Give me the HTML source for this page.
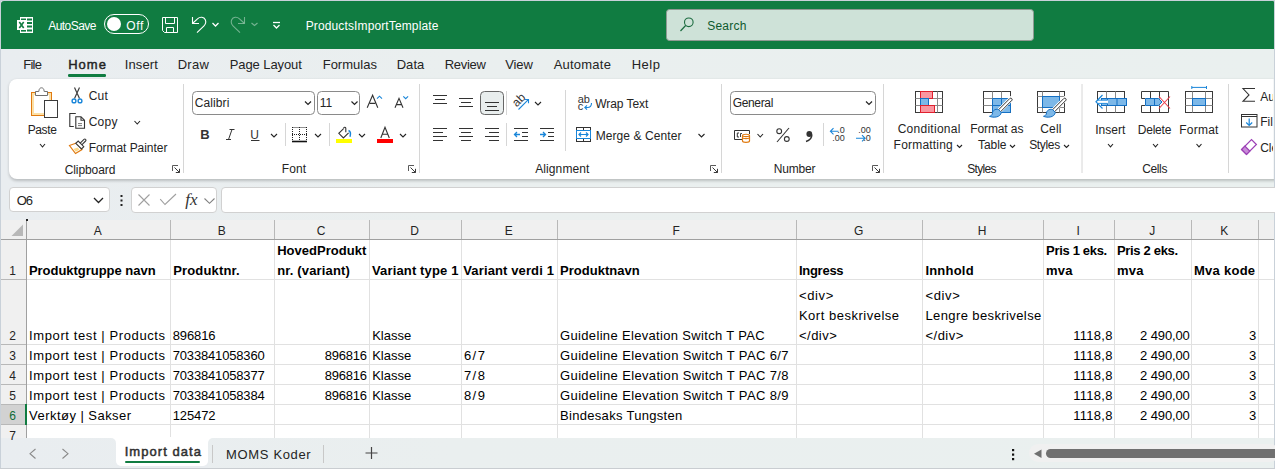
<!DOCTYPE html>
<html><head><meta charset="utf-8"><style>
html,body{margin:0;padding:0;width:1275px;height:469px;overflow:hidden;position:relative;background:#fff}
.t{position:absolute;white-space:pre;line-height:1;font-family:"Liberation Sans",sans-serif}
svg{overflow:visible}
</style></head><body>
<div style="position:absolute;left:0px;top:0px;width:1275px;height:469px;background:#C9D1D9"></div>
<div style="position:absolute;left:1px;top:1px;width:1273px;height:467px;background:linear-gradient(90deg,#E9EDF0 0px,#EAEFEF 450px,#EAF0EF 1273px)"></div>
<div style="position:absolute;left:1px;top:1px;width:1273px;height:48px;background:#107C41;border-top-left-radius:3px;border-top-right-radius:1px"></div>
<div style="position:absolute;left:9px;top:79px;width:1280px;height:100px;background:#fff;border-radius:8px;box-shadow:0 1.5px 3px rgba(0,0,0,0.2)"></div>
<div style="position:absolute;left:1274px;top:49px;width:1px;height:420px;background:#C9D1D9"></div>
<div style="position:absolute;left:9px;top:187px;width:101px;height:25px;background:#fff;border:1px solid #D1D1D1;box-sizing:border-box;border-radius:4px"></div>
<div style="position:absolute;left:131px;top:187px;width:86px;height:26px;background:#fff;border:1px solid #D1D1D1;box-sizing:border-box;border-radius:4px"></div>
<div style="position:absolute;left:221px;top:187px;width:1060px;height:26px;background:#fff;border:1px solid #D1D1D1;box-sizing:border-box;border-radius:4px"></div>
<div style="position:absolute;left:1px;top:220px;width:1273px;height:218px;background:#fff"></div>
<div style="position:absolute;left:1px;top:220px;width:1273px;height:19px;background:#F0F0F0"></div>
<div style="position:absolute;left:1px;top:240px;width:25px;height:198px;background:#F0F0F0"></div>
<div style="position:absolute;left:1px;top:405px;width:25px;height:19px;background:#D2D2D2"></div>
<div style="position:absolute;left:27px;top:279px;width:1247px;height:1px;background:#E1E1E1"></div>
<div style="position:absolute;left:27px;top:344px;width:1247px;height:1px;background:#E1E1E1"></div>
<div style="position:absolute;left:27px;top:364px;width:1247px;height:1px;background:#E1E1E1"></div>
<div style="position:absolute;left:27px;top:384px;width:1247px;height:1px;background:#E1E1E1"></div>
<div style="position:absolute;left:27px;top:404px;width:1247px;height:1px;background:#E1E1E1"></div>
<div style="position:absolute;left:27px;top:424px;width:1247px;height:1px;background:#E1E1E1"></div>
<div style="position:absolute;left:170px;top:240px;width:1px;height:198px;background:#E1E1E1"></div>
<div style="position:absolute;left:274px;top:240px;width:1px;height:198px;background:#E1E1E1"></div>
<div style="position:absolute;left:369px;top:240px;width:1px;height:198px;background:#E1E1E1"></div>
<div style="position:absolute;left:461px;top:240px;width:1px;height:198px;background:#E1E1E1"></div>
<div style="position:absolute;left:557px;top:240px;width:1px;height:198px;background:#E1E1E1"></div>
<div style="position:absolute;left:796px;top:240px;width:1px;height:198px;background:#E1E1E1"></div>
<div style="position:absolute;left:922px;top:240px;width:1px;height:198px;background:#E1E1E1"></div>
<div style="position:absolute;left:1043px;top:240px;width:1px;height:198px;background:#E1E1E1"></div>
<div style="position:absolute;left:1114px;top:240px;width:1px;height:198px;background:#E1E1E1"></div>
<div style="position:absolute;left:1191px;top:240px;width:1px;height:198px;background:#E1E1E1"></div>
<div style="position:absolute;left:1258px;top:240px;width:1px;height:198px;background:#E1E1E1"></div>
<div style="position:absolute;left:170px;top:220px;width:1px;height:19px;background:#B8B8B8"></div>
<div style="position:absolute;left:274px;top:220px;width:1px;height:19px;background:#B8B8B8"></div>
<div style="position:absolute;left:369px;top:220px;width:1px;height:19px;background:#B8B8B8"></div>
<div style="position:absolute;left:461px;top:220px;width:1px;height:19px;background:#B8B8B8"></div>
<div style="position:absolute;left:557px;top:220px;width:1px;height:19px;background:#B8B8B8"></div>
<div style="position:absolute;left:796px;top:220px;width:1px;height:19px;background:#B8B8B8"></div>
<div style="position:absolute;left:922px;top:220px;width:1px;height:19px;background:#B8B8B8"></div>
<div style="position:absolute;left:1043px;top:220px;width:1px;height:19px;background:#B8B8B8"></div>
<div style="position:absolute;left:1114px;top:220px;width:1px;height:19px;background:#B8B8B8"></div>
<div style="position:absolute;left:1191px;top:220px;width:1px;height:19px;background:#B8B8B8"></div>
<div style="position:absolute;left:1258px;top:220px;width:1px;height:19px;background:#B8B8B8"></div>
<div style="position:absolute;left:1px;top:279px;width:25px;height:1px;background:#B8B8B8"></div>
<div style="position:absolute;left:1px;top:344px;width:25px;height:1px;background:#B8B8B8"></div>
<div style="position:absolute;left:1px;top:364px;width:25px;height:1px;background:#B8B8B8"></div>
<div style="position:absolute;left:1px;top:384px;width:25px;height:1px;background:#B8B8B8"></div>
<div style="position:absolute;left:1px;top:404px;width:25px;height:1px;background:#B8B8B8"></div>
<div style="position:absolute;left:1px;top:424px;width:25px;height:1px;background:#B8B8B8"></div>
<div style="position:absolute;left:1px;top:239px;width:1273px;height:1px;background:#A0A0A0"></div>
<div style="position:absolute;left:26px;top:220px;width:1px;height:218px;background:#A0A0A0"></div>
<div style="position:absolute;left:25px;top:404px;width:2px;height:21px;background:#107C41"></div>
<div style="position:absolute;left:26px;top:219px;width:2px;height:2px;background:#222"></div>
<div style="position:absolute;left:100px;top:438px;width:130px;height:10px;background:#fff"></div>
<div style="position:absolute;left:100px;top:458px;width:130px;height:10px;background:#E9EDF0"></div>
<div style="position:absolute;left:116px;top:437px;width:92px;height:29px;background:#fff;border-radius:0 0 5px 5px"></div>
<div style="position:absolute;left:1px;top:438px;width:115px;height:30px;background:linear-gradient(90deg,#E9EDF0 0px,#EAEFEF 450px,#EAF0EF 1273px);background-size:1273px 30px;border-top-right-radius:5px"></div>
<div style="position:absolute;left:208px;top:438px;width:1066px;height:30px;background:linear-gradient(90deg,#E9EDF0 0px,#EAEFEF 450px,#EAF0EF 1273px);background-size:1273px 30px;background-position:-207px 0;border-top-left-radius:5px"></div>
<div style="position:absolute;left:125px;top:461px;width:75px;height:2px;background:#107C41;border-radius:1px"></div>
<div style="position:absolute;left:212px;top:445px;width:1px;height:18px;background:#C8C8C8"></div>
<div style="position:absolute;left:323px;top:445px;width:1px;height:18px;background:#C8C8C8"></div>
<div style="position:absolute;left:1029px;top:444px;width:250px;height:18px;background:#F0F0F0;border-radius:9px"></div>
<div style="position:absolute;left:1046px;top:449px;width:240px;height:9px;background:#707070;border-radius:4.5px"></div>
<div style="position:absolute;left:0px;top:468px;width:1275px;height:1px;background:#C9CDD1"></div>
<div style="position:absolute;left:68px;top:74px;width:38px;height:2.5px;background:#107C41;border-radius:1.25px"></div>
<svg style="position:absolute;left:0;top:0" width="1275" height="469" viewBox="0 0 1275 469"><rect x="20" y="17" width="13" height="16" fill="#fff"/><rect x="21" y="18.5" width="5" height="1.6" fill="#107C41"/><rect x="27" y="18.5" width="5" height="2" fill="#107C41"/><rect x="27" y="22" width="5" height="2" fill="#107C41"/><rect x="27" y="25.5" width="5" height="2" fill="#107C41"/><rect x="27" y="29.5" width="5" height="2" fill="#107C41"/><rect x="21" y="30" width="5" height="1.6" fill="#107C41"/><rect x="17" y="20" width="9" height="10" fill="#fff"/><path d="M19.3,22 L23.7,28 M23.7,22 L19.3,28" stroke="#107C41" stroke-width="1.6"/><rect x="104.5" y="14.5" width="44" height="19" rx="9.5" stroke="#fff" stroke-width="1" fill="none"/><circle cx="114" cy="24" r="7" fill="#fff"/><path d="M162.5,17.5 H177.5 V32.5 H164.5 L162.5,30.5 Z M165.5,17.5 V23.5 H174.5 V17.5 M166.5,32.5 V27.5 H173.5 V32.5" stroke="#fff" stroke-width="1" fill="none"/><path d="M192.5,17 V23.5 H199" stroke="#fff" stroke-width="1.1" fill="none"/><path d="M193,23 L197.5,18.8 C200,16.5 204,16.8 205.3,19.8 C206.3,22.2 205.5,24.3 204,25.8 L197,32.7" stroke="#fff" stroke-width="1.1" fill="none"/><path d="M212.5,23 L215.5,26 L218.5,23" stroke="#fff" stroke-width="1.3" fill="none"/><path d="M244.5,17 V23.5 H238" stroke="rgba(255,255,255,0.42)" stroke-width="1.1" fill="none"/><path d="M244,23 L239.5,18.8 C237,16.5 233,16.8 231.7,19.8 C230.7,22.2 231.5,24.3 233,25.8 L240,32.7" stroke="rgba(255,255,255,0.42)" stroke-width="1.1" fill="none"/><path d="M251.5,23 L254.5,25.5 L257.5,23" stroke="rgba(255,255,255,0.42)" stroke-width="1.2" fill="none"/><path d="M273,22.5 H280" stroke="#fff" stroke-width="1.3"/><path d="M273.5,25 L276.5,28 L279.5,25" stroke="#fff" stroke-width="1.3" fill="none"/><rect x="666.5" y="9.5" width="367" height="31" rx="3" fill="#CEE2D8" stroke="#8F9A93" stroke-width="1"/><circle cx="688.8" cy="22.3" r="4.3" stroke="#1B6B3F" stroke-width="1.1" fill="none"/><path d="M685.6,25.5 L680.5,31" stroke="#1B6B3F" stroke-width="1.2"/><rect x="31.5" y="92.5" width="20" height="23" fill="#fff" stroke="#E07A10" stroke-width="1"/><rect x="33" y="94" width="17" height="20" fill="none" stroke="#FCE0A6" stroke-width="2"/><path d="M35.5,95.5 V91.5 H38.8 C39,88.6 40.2,87.8 41.5,87.8 C42.8,87.8 44,88.6 44.2,91.5 H47.5 V95.5 Z" fill="#fff" stroke="#707070" stroke-width="1"/><rect x="44.5" y="100.5" width="13" height="17" fill="#fff" stroke="#3B3B3B" stroke-width="1"/><path d="M40,144 L42.5,147 L45,144" stroke="#242424" stroke-width="1.1" fill="none"/><path d="M74.5,87.5 L79.5,98.5 M79.5,87.5 L74.5,98.5" stroke="#404040" stroke-width="1.2"/><circle cx="74" cy="100.9" r="1.9" stroke="#1A86D9" stroke-width="1.4" fill="none"/><circle cx="80" cy="100.9" r="1.9" stroke="#1A86D9" stroke-width="1.4" fill="none"/><path d="M75.8,113.5 H69.8 V126.5 H73.8" stroke="#333" stroke-width="1.1" fill="none"/><path d="M75.8,116.7 H81 L84.5,120.2 V128.3 H75.8 Z M81,116.7 V120.2 H84.5" stroke="#333" stroke-width="1.1" fill="none"/><path d="M78,123.6 H82 M78,125.6 H82" stroke="#555" stroke-width="0.8"/><path d="M134.5,121 L137.25,124 L140.0,121" stroke="#242424" stroke-width="1.1" fill="none"/><path d="M76.5,143 L69.5,145.5 L75.5,153.5 L82,149.5 Z" fill="#fff" stroke="#E07A10" stroke-width="1.2"/><path d="M73.5,149 L75.8,151.8 L79.5,149.6 L77.5,147.5 Z" fill="#FCD98A"/><path d="M81,144 L84.8,140.2" stroke="#3a3a3a" stroke-width="3.4" stroke-linecap="round"/><path d="M81,144 L84.8,140.2" stroke="#fff" stroke-width="1.2" stroke-linecap="round"/><path d="M75.8,143.3 L81.5,149 L83.8,146.7 L78.2,141 Z" fill="#fff" stroke="#3a3a3a" stroke-width="1.1"/><path d="M172.5,171 V165.5 H178" stroke="#5a5a5a" stroke-width="1" fill="none"/><path d="M174.5,167.5 L179.5,172.5 M179.5,168.8 V172.5 H175.8" stroke="#3a3a3a" stroke-width="1" fill="none"/><path d="M183.5,84 V173" stroke="#D6D6D6" stroke-width="1"/><path d="M419.5,84 V173" stroke="#D6D6D6" stroke-width="1"/><path d="M721.5,84 V173" stroke="#D6D6D6" stroke-width="1"/><path d="M883.5,84 V173" stroke="#D6D6D6" stroke-width="1"/><path d="M1082,84 V173" stroke="#D6D6D6" stroke-width="1"/><path d="M1228.5,84 V173" stroke="#D6D6D6" stroke-width="1"/><rect x="192.5" y="91.5" width="122" height="23" rx="4" fill="#fff" stroke="#8A8A8A" stroke-width="1"/><path d="M305,101.5 L308.0,104.5 L311,101.5" stroke="#242424" stroke-width="1.2" fill="none"/><rect x="317.5" y="91.5" width="42" height="23" rx="4" fill="#fff" stroke="#8A8A8A" stroke-width="1"/><path d="M351.5,101.5 L354.5,104.5 L357.5,101.5" stroke="#242424" stroke-width="1.2" fill="none"/><path d="M367.2,107.7 L372.6,95.2 L377.8,107.7 M369.8,103.4 H375.2" stroke="#333" stroke-width="1.1" fill="none"/><path d="M377,98.7 L379.5,96.2 L382,98.7" stroke="#1A86D9" stroke-width="1.1" fill="none"/><path d="M395,107.7 L399,98.3 L403,107.7 M396.7,104.6 H401.3" stroke="#333" stroke-width="1.1" fill="none"/><path d="M403.3,96.3 L405.7,98.7 L408.1,96.3" stroke="#1A86D9" stroke-width="1.1" fill="none"/><path d="M271,134 L274.0,137 L277,134" stroke="#242424" stroke-width="1.1" fill="none"/><path d="M229.5,129.5 H234.5 M226,139.5 H231 M232,129.5 L228.5,139.5" stroke="#333" stroke-width="1"/><path d="M251,140.5 H259.5" stroke="#333" stroke-width="1"/><path d="M285.5,123 V146 M329.5,123 V146" stroke="#D6D6D6" stroke-width="1"/><path d="M292.5,127.5 H307 M292.5,127 V140 M306.5,127 V140 M299.5,127 V140 M292,134.5 H307" stroke="#222" stroke-width="1" stroke-dasharray="1 1" fill="none"/><path d="M292,141.5 H307" stroke="#111" stroke-width="1.6"/><path d="M315,134 L318.0,137 L321,134" stroke="#242424" stroke-width="1.1" fill="none"/><path d="M343.6,128.6 L338.8,133.3 L343.4,138 L348.6,132.8" fill="#fff" stroke="#333" stroke-width="1.1"/><path d="M343.6,128.6 C343.6,126.9 345.6,126.6 345.8,128.4 V132.2" stroke="#333" stroke-width="1.1" fill="none"/><path d="M348.5,130.5 C350.3,131.2 350.8,134 350,136.8" stroke="#1A86D9" stroke-width="1.5" fill="none"/><rect x="336" y="139" width="16" height="4" fill="#FFFF00"/><path d="M359,134 L362.0,137 L365,134" stroke="#242424" stroke-width="1.1" fill="none"/><path d="M380.8,138 L385,127.3 L389.3,138 M382.3,134.3 H387.8" stroke="#333" stroke-width="1.1" fill="none"/><rect x="377" y="139" width="16" height="4" fill="#FF0000"/><path d="M400,134 L403.0,137 L406,134" stroke="#242424" stroke-width="1.1" fill="none"/><path d="M408.5,171 V165.5 H414" stroke="#5a5a5a" stroke-width="1" fill="none"/><path d="M410.5,167.5 L415.5,172.5 M415.5,168.8 V172.5 H411.8" stroke="#3a3a3a" stroke-width="1" fill="none"/><path d="M433,95.5 H447 M435,99.5 H445 M433,103.5 H447" stroke="#333" stroke-width="1"/><path d="M459,98.5 H473 M461,102.5 H471 M459,106.5 H473" stroke="#333" stroke-width="1"/><rect x="480.5" y="91.5" width="23" height="23" rx="4" fill="#E9EEEE" stroke="#666" stroke-width="1"/><path d="M485,102.5 H499 M487,106.5 H497 M485,110.5 H499" stroke="#333" stroke-width="1"/><path d="M506.5,91 V115 M506.5,123 V146 M823.5,123 V146" stroke="#D6D6D6" stroke-width="1"/><path d="M518.5,109.5 L528.3,99.7 M524.8,99.5 H528.5 V103.2" stroke="#1A86D9" stroke-width="1.1" fill="none"/><path d="M535,102 L538.0,105 L541,102" stroke="#242424" stroke-width="1.1" fill="none"/><path d="M433,128.5 H447 M433,132.5 H443 M433,136.5 H447 M433,140.5 H443" stroke="#333" stroke-width="1"/><path d="M459,128.5 H473 M461,132.5 H471 M459,136.5 H473 M461,140.5 H471" stroke="#333" stroke-width="1"/><path d="M485,128.5 H499 M489,132.5 H499 M485,136.5 H499 M489,140.5 H499" stroke="#333" stroke-width="1"/><path d="M514,128.5 H528 M522,132.5 H528 M522,136.5 H528 M514,140.5 H528" stroke="#333" stroke-width="1"/><path d="M520,134.5 H514.8 M517,132 L514.5,134.5 L517,137" stroke="#1A86D9" stroke-width="1.3" fill="none"/><path d="M540,128.5 H554 M548,132.5 H554 M548,136.5 H554 M540,140.5 H554" stroke="#333" stroke-width="1"/><path d="M540,134.5 H545.2 M543,132 L545.5,134.5 L543,137" stroke="#1A86D9" stroke-width="1.3" fill="none"/><path d="M565.5,90 V151" stroke="#D6D6D6" stroke-width="1"/><path d="M591.5,103 C591.5,106 590,107.5 587.5,107.5 H585 M587,105.3 L584.8,107.5 L587,109.7" stroke="#1A86D9" stroke-width="1.1" fill="none"/><rect x="576.5" y="127.5" width="14" height="14" fill="none" stroke="#333" stroke-width="1"/><path d="M583.5,127.5 V130.5 M583.5,138.5 V141.5" stroke="#333" stroke-width="1"/><rect x="576.5" y="130.5" width="14" height="8" fill="#fff" stroke="#1A86D9" stroke-width="1"/><path d="M579,134.5 H588 M581,132.5 L579,134.5 L581,136.5 M586,132.5 L588,134.5 L586,136.5" stroke="#1A86D9" stroke-width="1.2" fill="none"/><path d="M698.5,134 L701.5,137 L704.5,134" stroke="#242424" stroke-width="1.1" fill="none"/><path d="M710.5,171 V165.5 H716" stroke="#5a5a5a" stroke-width="1" fill="none"/><path d="M712.5,167.5 L717.5,172.5 M717.5,168.8 V172.5 H713.8" stroke="#3a3a3a" stroke-width="1" fill="none"/><rect x="730.5" y="91.5" width="145" height="23" rx="4" fill="#fff" stroke="#8A8A8A" stroke-width="1"/><path d="M866,101.5 L869.0,104.5 L872,101.5" stroke="#242424" stroke-width="1.2" fill="none"/><path d="M744,139.5 H734.5 V130.5 H749.5 V134" stroke="#333" stroke-width="1" fill="none"/><path d="M739,133 H737.3 V137 H739" stroke="#333" stroke-width="1" fill="none"/><path d="M740.5,137 V133.5 H742" stroke="#333" stroke-width="0.9" fill="none"/><path d="M742.5,135.5 C742.5,133.8 749.5,133.8 749.5,135.5 V141 C749.5,142.8 742.5,142.8 742.5,141 Z" fill="#fff" stroke="#E07A10" stroke-width="1.2"/><path d="M742.5,137.5 C742.5,139 749.5,139 749.5,137.5 M742.5,135.5 C742.5,137 749.5,137 749.5,135.5" stroke="#E07A10" stroke-width="1.1" fill="none"/><path d="M757.5,134 L760.25,137 L763.0,134" stroke="#242424" stroke-width="1.1" fill="none"/><circle cx="779.2" cy="131.2" r="2.4" stroke="#333" stroke-width="1.1" fill="none"/><circle cx="786.8" cy="139" r="2.4" stroke="#333" stroke-width="1.1" fill="none"/><path d="M789,128 L777,142" stroke="#333" stroke-width="1.1"/><circle cx="809.3" cy="134" r="2.9" fill="#333"/><path d="M811.8,134.5 C811.8,138 809.5,140.5 806,141.5" stroke="#333" stroke-width="1.6" fill="none"/><path d="M838.5,131.3 H830.5 M833.5,128.2 L830.4,131.3 L833.5,134.4" stroke="#1A86D9" stroke-width="1.1" fill="none"/><path d="M856,138.3 H865 M862,135.2 L865.1,138.3 L862,141.4" stroke="#1A86D9" stroke-width="1.1" fill="none"/><path d="M872.5,171 V165.5 H878" stroke="#5a5a5a" stroke-width="1" fill="none"/><path d="M874.5,167.5 L879.5,172.5 M879.5,168.8 V172.5 H875.8" stroke="#3a3a3a" stroke-width="1" fill="none"/><rect x="915.5" y="91.5" width="27" height="21" fill="#fff" stroke="#3a3a3a" stroke-width="1"/><path d="M915.5,98.5 H942.5 M915.5,105.5 H942.5 M920.5,91.5 V112.5 M937.5,91.5 V112.5" stroke="#8a8a8a" stroke-width="1"/><rect x="920.5" y="91.5" width="12" height="7" fill="#FA96A0" stroke="#E0202E" stroke-width="1"/><rect x="920.5" y="98.5" width="8" height="7" fill="#7DB8E8" stroke="#1470C4" stroke-width="1"/><path d="M928.5,98.5 H942.5 M928.5,105.5 H942.5" stroke="#fff" stroke-width="0"/><rect x="920.5" y="105.5" width="14" height="7" fill="#FA96A0" stroke="#E0202E" stroke-width="1"/><rect x="983.5" y="91.5" width="27" height="21" fill="#fff" stroke="#3a3a3a" stroke-width="1"/><path d="M983.5,98.5 H1010.5 M983.5,105.5 H1010.5 M992.5,91.5 V112.5 M1001.5,91.5 V112.5" stroke="#8a8a8a" stroke-width="1"/><path d="M992.5,112.5 V98.5 H1010.5 V112.5 Z" fill="#7DB8E8" stroke="#1470C4" stroke-width="1"/><path d="M992.5,105.5 H1010.5 M1001.5,98.5 V112.5" stroke="#1470C4" stroke-width="1"/><path d="M999.0,111.0 L1011.5,98.5" stroke="#fff" stroke-width="5" stroke-linecap="round"/><path d="M998.3,110.0 L1009.8,98.5 C1010.8,97.5 1012.8,98.8 1012.0,100.2 L1000.3,112.0 Z" fill="#fff" stroke="#333" stroke-width="1"/><path d="M998.5,109.5 C995.0,108.5 992.5,111.0 992.5,113.0 C992.5,115.0 991.0,115.8 989.5,116.3 C993.5,118.0 1000.5,117.5 1001.3,112.5 Z" fill="#7DB8E8" stroke="#1470C4" stroke-width="1"/><rect x="1037.5" y="91.5" width="27" height="21" fill="#fff" stroke="#3a3a3a" stroke-width="1"/><path d="M1037.5,96.5 H1064.5 M1037.5,107.5 H1064.5 M1042.5,91.5 V112.5 M1059.5,91.5 V112.5" stroke="#8a8a8a" stroke-width="1"/><rect x="1042.5" y="96.5" width="17" height="11" fill="#7DB8E8" stroke="#1470C4" stroke-width="1"/><path d="M1053.0,111.0 L1065.5,98.5" stroke="#fff" stroke-width="5" stroke-linecap="round"/><path d="M1052.3,110.0 L1063.8,98.5 C1064.8,97.5 1066.8,98.8 1066.0,100.2 L1054.3,112.0 Z" fill="#fff" stroke="#333" stroke-width="1"/><path d="M1052.5,109.5 C1049.0,108.5 1046.5,111.0 1046.5,113.0 C1046.5,115.0 1045.0,115.8 1043.5,116.3 C1047.5,118.0 1054.5,117.5 1055.3,112.5 Z" fill="#7DB8E8" stroke="#1470C4" stroke-width="1"/><path d="M957,145 L959.5,147.5 L962,145" stroke="#242424" stroke-width="1.1" fill="none"/><path d="M1010,145 L1012.5,147.5 L1015,145" stroke="#242424" stroke-width="1.1" fill="none"/><path d="M1064,145 L1066.5,147.5 L1069,145" stroke="#242424" stroke-width="1.1" fill="none"/><rect x="1097.5" y="91.5" width="27" height="21" fill="#fff" stroke="#3a3a3a" stroke-width="1"/><path d="M1106.5,91.5 V112.5 M1115.5,91.5 V112.5" stroke="#8a8a8a" stroke-width="1"/><rect x="1101.5" y="98.5" width="25" height="7" fill="#7DB8E8" stroke="#1470C4" stroke-width="1"/><path d="M1107.5,98.5 V105.5 M1117,98.5 V105.5" stroke="#1470C4" stroke-width="1"/><rect x="1097" y="100.2" width="11" height="3.2" fill="#fff"/><path d="M1097,100.2 H1107.5 M1097,103.4 H1107.5" stroke="#1A86D9" stroke-width="0.9"/><path d="M1102.5,95 L1096,101.8 L1102.5,108.5" stroke="#1A86D9" stroke-width="1.2" fill="none"/><path d="M1141.5,98.5 V91.5 H1168.5 V112.5 H1141.5 V105.5 M1150.5,91.5 V98.5 M1159.5,91.5 V98.5 M1150.5,105.5 V112.5 M1159.5,105.5 V112.5 M1141.5,98.5 H1145 M1141.5,105.5 H1145" stroke="#3a3a3a" stroke-width="1" fill="none"/><path d="M1145.5,98.5 H1158.5 L1162,102 L1158.5,105.5 H1145.5 Z" fill="#7DB8E8" stroke="#1470C4" stroke-width="1"/><path d="M1154.5,98.5 V105.5" stroke="#1470C4" stroke-width="1"/><path d="M1159,96.5 L1170,108.5 M1170,96.5 L1159,108.5" stroke="#EE3F4B" stroke-width="1.1"/><path d="M1191.8,87.4 H1206.5 M1191.8,86 V89 M1206.5,86 V89" stroke="#1A86D9" stroke-width="1"/><rect x="1185.5" y="91.5" width="27" height="21" fill="#fff" stroke="#3a3a3a" stroke-width="1"/><path d="M1185.5,98.5 H1212.5 M1185.5,105.5 H1212.5 M1192.5,91.5 V112.5 M1205.5,91.5 V112.5" stroke="#8a8a8a" stroke-width="1"/><rect x="1192.5" y="98.5" width="13" height="7" fill="#7DB8E8" stroke="#1470C4" stroke-width="1"/><path d="M1108,144 L1110.5,146.8 L1113,144" stroke="#242424" stroke-width="1.1" fill="none"/><path d="M1153,144 L1155.5,146.8 L1158,144" stroke="#242424" stroke-width="1.1" fill="none"/><path d="M1196.5,144 L1199.0,146.8 L1201.5,144" stroke="#242424" stroke-width="1.1" fill="none"/><path d="M1255,88.5 H1243 L1249,95 L1243,101.3 H1255" stroke="#333" stroke-width="1.1" fill="none"/><rect x="1241.5" y="114.5" width="15.5" height="12.5" fill="#fff" stroke="#333" stroke-width="1"/><path d="M1241.5,116.5 H1257" stroke="#333" stroke-width="1"/><path d="M1249.2,118.5 V125.5 M1246.2,122.5 L1249.2,125.5 L1252.2,122.5" stroke="#1A86D9" stroke-width="1.2" fill="none"/><path d="M1256.4,144.5 L1251.5,139.6 L1241.6,149.5 L1246.5,154.4 Z" fill="#fff" stroke="#9B3FB5" stroke-width="1.2"/><path d="M1241.6,149.5 L1246.5,154.4 L1249.8,151.1 L1244.9,146.2 Z" fill="#C88BD8" stroke="#9B3FB5" stroke-width="1.2"/><path d="M94,198 L98.5,202.5 L103,198" stroke="#242424" stroke-width="1.3" fill="none"/><rect x="120.5" y="195" width="2" height="2" fill="#222"/><rect x="120.5" y="199.5" width="2" height="2" fill="#222"/><rect x="120.5" y="204" width="2" height="2" fill="#222"/><path d="M138.5,194.5 L149.5,205.5 M149.5,194.5 L138.5,205.5" stroke="#A0A0A0" stroke-width="1.1"/><path d="M160.2,199.2 L165,204.5 L176,194" stroke="#A0A0A0" stroke-width="1.1" fill="none"/><path d="M204.5,198.5 L209.5,203.3 L214.5,198.5" stroke="#808080" stroke-width="1.1" fill="none"/><path d="M23,224.5 V236 H11.5 Z" fill="#B8B8B8"/><path d="M35.5,449 L30,453.7 L35.5,458.5 M62.5,449 L68,453.7 L62.5,458.5" stroke="#8a8a8a" stroke-width="1.1" fill="none"/><path d="M371.5,447 V459 M365.5,453 H377.5" stroke="#444" stroke-width="1.2"/><rect x="1012" y="449" width="2.2" height="2.2" fill="#111"/><rect x="1012" y="453.5" width="2.2" height="2.2" fill="#111"/><rect x="1012" y="458" width="2.2" height="2.2" fill="#111"/><path d="M1041.5,449.5 V458 L1034,453.7 Z" fill="#707070"/></svg>
<div class="t" style="left:48.2px;top:19.5px;font-size:12px;font-weight:400;color:#FFFFFF;letter-spacing:-0.550px;">AutoSave</div>
<div class="t" style="left:126.2px;top:19.5px;font-size:12px;font-weight:400;color:#FFFFFF;letter-spacing:0.702px;">Off</div>
<div class="t" style="left:305.7px;top:19.5px;font-size:12px;font-weight:400;color:#FFFFFF;letter-spacing:0.126px;">ProductsImportTemplate</div>
<div class="t" style="left:707.2px;top:20px;font-size:12px;font-weight:400;color:#0F5A2E;letter-spacing:0.234px;">Search</div>
<div class="t" style="left:23.2px;top:58px;font-size:13px;font-weight:400;color:#242424;letter-spacing:-0.751px;">File</div>
<div class="t" style="left:124.7px;top:58px;font-size:13px;font-weight:400;color:#242424;letter-spacing:0.137px;">Insert</div>
<div class="t" style="left:177.7px;top:58px;font-size:13px;font-weight:400;color:#242424;letter-spacing:0.285px;">Draw</div>
<div class="t" style="left:229.7px;top:58px;font-size:13px;font-weight:400;color:#242424;letter-spacing:-0.082px;">Page Layout</div>
<div class="t" style="left:322.7px;top:58px;font-size:13px;font-weight:400;color:#242424;letter-spacing:0.002px;">Formulas</div>
<div class="t" style="left:396.7px;top:58px;font-size:13px;font-weight:400;color:#242424;letter-spacing:0.044px;">Data</div>
<div class="t" style="left:444.7px;top:58px;font-size:13px;font-weight:400;color:#242424;letter-spacing:-0.285px;">Review</div>
<div class="t" style="left:505.2px;top:58px;font-size:13px;font-weight:400;color:#242424;letter-spacing:-0.084px;">View</div>
<div class="t" style="left:553.7px;top:58px;font-size:13px;font-weight:400;color:#242424;letter-spacing:0.221px;">Automate</div>
<div class="t" style="left:631.7px;top:58px;font-size:13px;font-weight:400;color:#242424;letter-spacing:0.483px;">Help</div>
<div class="t" style="left:68.2px;top:58px;font-size:13px;font-weight:400;color:#242424;letter-spacing:1.004px;-webkit-text-stroke:0.45px #242424;">Home</div>
<div class="t" style="left:27.7px;top:123.5px;font-size:12px;font-weight:400;color:#242424;letter-spacing:-0.372px;">Paste</div>
<div class="t" style="left:88.7px;top:90px;font-size:12px;font-weight:400;color:#242424;letter-spacing:0.256px;">Cut</div>
<div class="t" style="left:88.7px;top:115.5px;font-size:12px;font-weight:400;color:#242424;letter-spacing:0.228px;">Copy</div>
<div class="t" style="left:88.7px;top:141.5px;font-size:12px;font-weight:400;color:#242424;letter-spacing:-0.051px;">Format Painter</div>
<div class="t" style="left:64.7px;top:163.5px;font-size:12px;font-weight:400;color:#242424;letter-spacing:-0.084px;">Clipboard</div>
<div class="t" style="left:194.7px;top:97px;font-size:12px;font-weight:400;color:#242424;letter-spacing:0.114px;">Calibri</div>
<div class="t" style="left:319.7px;top:97px;font-size:12px;font-weight:400;color:#242424;letter-spacing:0.000px;">11</div>
<div class="t" style="left:281.7px;top:163px;font-size:12px;font-weight:400;color:#242424;letter-spacing:0.161px;">Font</div>
<div class="t" style="left:595.2px;top:97.5px;font-size:12px;font-weight:400;color:#242424;letter-spacing:-0.047px;">Wrap Text</div>
<div class="t" style="left:595.7px;top:130px;font-size:12px;font-weight:400;color:#242424;letter-spacing:0.077px;">Merge &amp; Center</div>
<div class="t" style="left:535.2px;top:163px;font-size:12px;font-weight:400;color:#242424;letter-spacing:0.103px;">Alignment</div>
<div class="t" style="left:732.7px;top:97px;font-size:12px;font-weight:400;color:#242424;letter-spacing:-0.334px;">General</div>
<div class="t" style="left:773.7px;top:163px;font-size:12px;font-weight:400;color:#242424;letter-spacing:-0.197px;">Number</div>
<div class="t" style="left:897.7px;top:123px;font-size:12px;font-weight:400;color:#242424;letter-spacing:0.265px;">Conditional</div>
<div class="t" style="left:893.6px;top:139px;font-size:12px;font-weight:400;color:#242424;letter-spacing:0.205px;">Formatting</div>
<div class="t" style="left:970.2px;top:123px;font-size:12px;font-weight:400;color:#242424;letter-spacing:-0.102px;">Format as</div>
<div class="t" style="left:978.0px;top:139px;font-size:12px;font-weight:400;color:#242424;letter-spacing:-0.072px;">Table</div>
<div class="t" style="left:1040.2px;top:123px;font-size:12px;font-weight:400;color:#242424;letter-spacing:0.176px;">Cell</div>
<div class="t" style="left:1029.2px;top:139px;font-size:12px;font-weight:400;color:#242424;letter-spacing:-0.338px;">Styles</div>
<div class="t" style="left:967.2px;top:163px;font-size:12px;font-weight:400;color:#242424;letter-spacing:-0.698px;">Styles</div>
<div class="t" style="left:1095.2px;top:123.5px;font-size:12px;font-weight:400;color:#242424;letter-spacing:0.037px;">Insert</div>
<div class="t" style="left:1137.7px;top:123.5px;font-size:12px;font-weight:400;color:#242424;letter-spacing:-0.197px;">Delete</div>
<div class="t" style="left:1179.2px;top:123.5px;font-size:12px;font-weight:400;color:#242424;letter-spacing:0.237px;">Format</div>
<div class="t" style="left:1142.2px;top:163px;font-size:12px;font-weight:400;color:#242424;letter-spacing:-0.368px;">Cells</div>
<div class="t" style="left:1260.2px;top:91px;font-size:12px;font-weight:400;color:#242424;letter-spacing:0.000px;">Au</div>
<div class="t" style="left:1260.2px;top:116px;font-size:12px;font-weight:400;color:#242424;letter-spacing:0.000px;">Fil</div>
<div class="t" style="left:1260.2px;top:141.5px;font-size:12px;font-weight:400;color:#242424;letter-spacing:0.000px;">Cle</div>
<div class="t" style="left:16.7px;top:193.5px;font-size:13px;font-weight:400;color:#242424;letter-spacing:-1.144px;">O6</div>
<div class="t" style="left:97.7px;top:224.5px;font-size:12px;font-weight:400;color:#242424;letter-spacing:0.000px;transform:translateX(-50%);">A</div>
<div class="t" style="left:221.7px;top:224.5px;font-size:12px;font-weight:400;color:#242424;letter-spacing:0.000px;transform:translateX(-50%);">B</div>
<div class="t" style="left:321.2px;top:224.5px;font-size:12px;font-weight:400;color:#242424;letter-spacing:0.000px;transform:translateX(-50%);">C</div>
<div class="t" style="left:414.7px;top:224.5px;font-size:12px;font-weight:400;color:#242424;letter-spacing:0.000px;transform:translateX(-50%);">D</div>
<div class="t" style="left:508.7px;top:224.5px;font-size:12px;font-weight:400;color:#242424;letter-spacing:0.000px;transform:translateX(-50%);">E</div>
<div class="t" style="left:676.2px;top:224.5px;font-size:12px;font-weight:400;color:#242424;letter-spacing:0.000px;transform:translateX(-50%);">F</div>
<div class="t" style="left:858.7px;top:224.5px;font-size:12px;font-weight:400;color:#242424;letter-spacing:0.000px;transform:translateX(-50%);">G</div>
<div class="t" style="left:982.2px;top:224.5px;font-size:12px;font-weight:400;color:#242424;letter-spacing:0.000px;transform:translateX(-50%);">H</div>
<div class="t" style="left:1078.2px;top:224.5px;font-size:12px;font-weight:400;color:#242424;letter-spacing:0.000px;transform:translateX(-50%);">I</div>
<div class="t" style="left:1152.2px;top:224.5px;font-size:12px;font-weight:400;color:#242424;letter-spacing:0.000px;transform:translateX(-50%);">J</div>
<div class="t" style="left:1224.2px;top:224.5px;font-size:12px;font-weight:400;color:#242424;letter-spacing:0.000px;transform:translateX(-50%);">K</div>
<div class="t" style="left:12.7px;top:264.5px;font-size:12px;font-weight:400;color:#242424;letter-spacing:0.000px;transform:translateX(-50%);">1</div>
<div class="t" style="left:12.7px;top:329.5px;font-size:12px;font-weight:400;color:#242424;letter-spacing:0.000px;transform:translateX(-50%);">2</div>
<div class="t" style="left:12.7px;top:349.5px;font-size:12px;font-weight:400;color:#242424;letter-spacing:0.000px;transform:translateX(-50%);">3</div>
<div class="t" style="left:12.7px;top:369.5px;font-size:12px;font-weight:400;color:#242424;letter-spacing:0.000px;transform:translateX(-50%);">4</div>
<div class="t" style="left:12.7px;top:389.5px;font-size:12px;font-weight:400;color:#242424;letter-spacing:0.000px;transform:translateX(-50%);">5</div>
<div class="t" style="left:12.7px;top:409.5px;font-size:12px;font-weight:400;color:#0E6B36;letter-spacing:0.000px;transform:translateX(-50%);">6</div>
<div class="t" style="left:12.7px;top:429.5px;font-size:12px;font-weight:400;color:#242424;letter-spacing:0.000px;transform:translateX(-50%);">7</div>
<div class="t" style="left:28.9px;top:264px;font-size:13px;font-weight:700;color:#000;letter-spacing:-0.025px;">Produktgruppe navn</div>
<div class="t" style="left:173.2px;top:264px;font-size:13px;font-weight:700;color:#000;letter-spacing:0.165px;">Produktnr.</div>
<div class="t" style="left:277.2px;top:244px;font-size:13px;font-weight:700;color:#000;letter-spacing:0.032px;">HovedProdukt</div>
<div class="t" style="left:277.2px;top:264px;font-size:13px;font-weight:700;color:#000;letter-spacing:0.159px;">nr. (variant)</div>
<div class="t" style="left:372.0px;top:264px;font-size:13px;font-weight:700;color:#000;letter-spacing:0.143px;">Variant type 1</div>
<div class="t" style="left:463.3px;top:264px;font-size:13px;font-weight:700;color:#000;letter-spacing:0.122px;">Variant verdi 1</div>
<div class="t" style="left:560.1px;top:264px;font-size:13px;font-weight:700;color:#000;letter-spacing:0.003px;">Produktnavn</div>
<div class="t" style="left:798.9px;top:264px;font-size:13px;font-weight:700;color:#000;letter-spacing:-0.258px;">Ingress</div>
<div class="t" style="left:925.4px;top:264px;font-size:13px;font-weight:700;color:#000;letter-spacing:0.210px;">Innhold</div>
<div class="t" style="left:1046.1px;top:244px;font-size:13px;font-weight:700;color:#000;letter-spacing:-0.323px;">Pris 1 eks.</div>
<div class="t" style="left:1046.1px;top:264px;font-size:13px;font-weight:700;color:#000;letter-spacing:0.184px;">mva</div>
<div class="t" style="left:1117.0px;top:244px;font-size:13px;font-weight:700;color:#000;letter-spacing:-0.323px;">Pris 2 eks.</div>
<div class="t" style="left:1117.0px;top:264px;font-size:13px;font-weight:700;color:#000;letter-spacing:0.184px;">mva</div>
<div class="t" style="left:1194.0px;top:264px;font-size:13px;font-weight:700;color:#000;letter-spacing:0.264px;">Mva kode</div>
<div class="t" style="left:29.1px;top:329px;font-size:13px;font-weight:400;color:#000;letter-spacing:0.604px;">Import test | Products</div>
<div class="t" style="left:172.7px;top:329px;font-size:13px;font-weight:400;color:#000;letter-spacing:-0.118px;">896816</div>
<div class="t" style="left:372.2px;top:329px;font-size:13px;font-weight:400;color:#000;letter-spacing:-0.006px;">Klasse</div>
<div class="t" style="left:560.1px;top:329px;font-size:13px;font-weight:400;color:#000;letter-spacing:0.329px;">Guideline Elevation Switch T PAC</div>
<div class="t" style="left:1073.2px;top:329px;font-size:13px;font-weight:400;color:#000;letter-spacing:0.271px;">1118,8</div>
<div class="t" style="left:1140.1px;top:329px;font-size:13px;font-weight:400;color:#000;letter-spacing:-0.130px;">2 490,00</div>
<div class="t" style="left:1249.1px;top:329px;font-size:13px;font-weight:400;color:#000;letter-spacing:0.000px;">3</div>
<div class="t" style="left:29.1px;top:349px;font-size:13px;font-weight:400;color:#000;letter-spacing:0.604px;">Import test | Products</div>
<div class="t" style="left:172.7px;top:349px;font-size:13px;font-weight:400;color:#000;letter-spacing:-0.167px;">7033841058360</div>
<div class="t" style="left:324.8px;top:349px;font-size:13px;font-weight:400;color:#000;letter-spacing:-0.218px;">896816</div>
<div class="t" style="left:372.2px;top:349px;font-size:13px;font-weight:400;color:#000;letter-spacing:-0.006px;">Klasse</div>
<div class="t" style="left:463.9px;top:349px;font-size:13px;font-weight:400;color:#000;letter-spacing:1.461px;">6/7</div>
<div class="t" style="left:560.1px;top:349px;font-size:13px;font-weight:400;color:#000;letter-spacing:0.350px;">Guideline Elevation Switch T PAC 6/7</div>
<div class="t" style="left:1073.2px;top:349px;font-size:13px;font-weight:400;color:#000;letter-spacing:0.271px;">1118,8</div>
<div class="t" style="left:1140.1px;top:349px;font-size:13px;font-weight:400;color:#000;letter-spacing:-0.130px;">2 490,00</div>
<div class="t" style="left:1249.1px;top:349px;font-size:13px;font-weight:400;color:#000;letter-spacing:0.000px;">3</div>
<div class="t" style="left:29.1px;top:369px;font-size:13px;font-weight:400;color:#000;letter-spacing:0.604px;">Import test | Products</div>
<div class="t" style="left:172.7px;top:369px;font-size:13px;font-weight:400;color:#000;letter-spacing:-0.167px;">7033841058377</div>
<div class="t" style="left:324.8px;top:369px;font-size:13px;font-weight:400;color:#000;letter-spacing:-0.218px;">896816</div>
<div class="t" style="left:372.2px;top:369px;font-size:13px;font-weight:400;color:#000;letter-spacing:-0.006px;">Klasse</div>
<div class="t" style="left:463.9px;top:369px;font-size:13px;font-weight:400;color:#000;letter-spacing:1.461px;">7/8</div>
<div class="t" style="left:560.1px;top:369px;font-size:13px;font-weight:400;color:#000;letter-spacing:0.350px;">Guideline Elevation Switch T PAC 7/8</div>
<div class="t" style="left:1073.2px;top:369px;font-size:13px;font-weight:400;color:#000;letter-spacing:0.271px;">1118,8</div>
<div class="t" style="left:1140.1px;top:369px;font-size:13px;font-weight:400;color:#000;letter-spacing:-0.130px;">2 490,00</div>
<div class="t" style="left:1249.1px;top:369px;font-size:13px;font-weight:400;color:#000;letter-spacing:0.000px;">3</div>
<div class="t" style="left:29.1px;top:389px;font-size:13px;font-weight:400;color:#000;letter-spacing:0.604px;">Import test | Products</div>
<div class="t" style="left:172.7px;top:389px;font-size:13px;font-weight:400;color:#000;letter-spacing:-0.167px;">7033841058384</div>
<div class="t" style="left:324.8px;top:389px;font-size:13px;font-weight:400;color:#000;letter-spacing:-0.218px;">896816</div>
<div class="t" style="left:372.2px;top:389px;font-size:13px;font-weight:400;color:#000;letter-spacing:-0.006px;">Klasse</div>
<div class="t" style="left:463.9px;top:389px;font-size:13px;font-weight:400;color:#000;letter-spacing:1.461px;">8/9</div>
<div class="t" style="left:560.1px;top:389px;font-size:13px;font-weight:400;color:#000;letter-spacing:0.350px;">Guideline Elevation Switch T PAC 8/9</div>
<div class="t" style="left:1073.2px;top:389px;font-size:13px;font-weight:400;color:#000;letter-spacing:0.271px;">1118,8</div>
<div class="t" style="left:1140.1px;top:389px;font-size:13px;font-weight:400;color:#000;letter-spacing:-0.130px;">2 490,00</div>
<div class="t" style="left:1249.1px;top:389px;font-size:13px;font-weight:400;color:#000;letter-spacing:0.000px;">3</div>
<div class="t" style="left:29.1px;top:409px;font-size:13px;font-weight:400;color:#000;letter-spacing:0.457px;">Verktøy | Sakser</div>
<div class="t" style="left:172.7px;top:409px;font-size:13px;font-weight:400;color:#000;letter-spacing:-0.118px;">125472</div>
<div class="t" style="left:560.1px;top:409px;font-size:13px;font-weight:400;color:#000;letter-spacing:0.295px;">Bindesaks Tungsten</div>
<div class="t" style="left:1073.2px;top:409px;font-size:13px;font-weight:400;color:#000;letter-spacing:0.271px;">1118,8</div>
<div class="t" style="left:1140.1px;top:409px;font-size:13px;font-weight:400;color:#000;letter-spacing:-0.130px;">2 490,00</div>
<div class="t" style="left:1249.1px;top:409px;font-size:13px;font-weight:400;color:#000;letter-spacing:0.000px;">3</div>
<div class="t" style="left:798.9px;top:289px;font-size:13px;font-weight:400;color:#000;letter-spacing:0.647px;">&lt;div&gt;</div>
<div class="t" style="left:798.9px;top:309px;font-size:13px;font-weight:400;color:#000;letter-spacing:0.514px;">Kort beskrivelse</div>
<div class="t" style="left:798.9px;top:329px;font-size:13px;font-weight:400;color:#000;letter-spacing:0.516px;">&lt;/div&gt;</div>
<div class="t" style="left:925.4px;top:289px;font-size:13px;font-weight:400;color:#000;letter-spacing:0.647px;">&lt;div&gt;</div>
<div class="t" style="left:925.4px;top:309px;font-size:13px;font-weight:400;color:#000;letter-spacing:0.399px;">Lengre beskrivelse</div>
<div class="t" style="left:925.4px;top:329px;font-size:13px;font-weight:400;color:#000;letter-spacing:0.516px;">&lt;/div&gt;</div>
<div class="t" style="left:124.7px;top:444.5px;font-size:13px;font-weight:400;color:#303030;letter-spacing:1.043px;-webkit-text-stroke:0.5px #303030;">Import data</div>
<div class="t" style="left:226.1px;top:448px;font-size:13px;font-weight:400;color:#242424;letter-spacing:0.650px;">MOMS Koder</div>
<div class="t" style="left:200.2px;top:128px;font-size:13px;font-weight:700;color:#333;letter-spacing:0.000px;">B</div>
<div class="t" style="left:250.2px;top:129px;font-size:12px;font-weight:400;color:#333;letter-spacing:0.000px;">U</div>
<div class="t" style="left:577.7px;top:94px;font-size:11px;font-weight:400;color:#333;letter-spacing:0.000px;">ab</div>
<div class="t" style="left:577.7px;top:101px;font-size:11px;font-weight:400;color:#333;letter-spacing:0.000px;">c</div>
<div class="t" style="left:837.2px;top:126px;font-size:9px;font-weight:400;color:#333;letter-spacing:0.000px;">.0</div>
<div class="t" style="left:832.2px;top:134px;font-size:9px;font-weight:400;color:#333;letter-spacing:0.000px;">.00</div>
<div class="t" style="left:858.2px;top:126px;font-size:9px;font-weight:400;color:#333;letter-spacing:0.000px;">.00</div>
<div class="t" style="left:863.2px;top:134px;font-size:9px;font-weight:400;color:#333;letter-spacing:0.000px;">.0</div>
<div class="t" style="left:185.2px;top:191px;font-size:17px;font-weight:400;color:#333;letter-spacing:0.000px;font-family:'Liberation Serif',serif;font-style:italic;">fx</div>
<div class="t" style="left:511.7px;top:93.5px;font-size:12px;font-weight:400;color:#333;letter-spacing:0.000px;transform:rotate(-45deg);transform-origin:50% 50%;">ab</div>
<div style="position:absolute;left:1274px;top:49px;width:1px;height:138px;background:#C9D1D9"></div>
<div style="position:absolute;left:1273px;top:79px;width:1px;height:100px;background:#F4F6F7"></div>
</body></html>
